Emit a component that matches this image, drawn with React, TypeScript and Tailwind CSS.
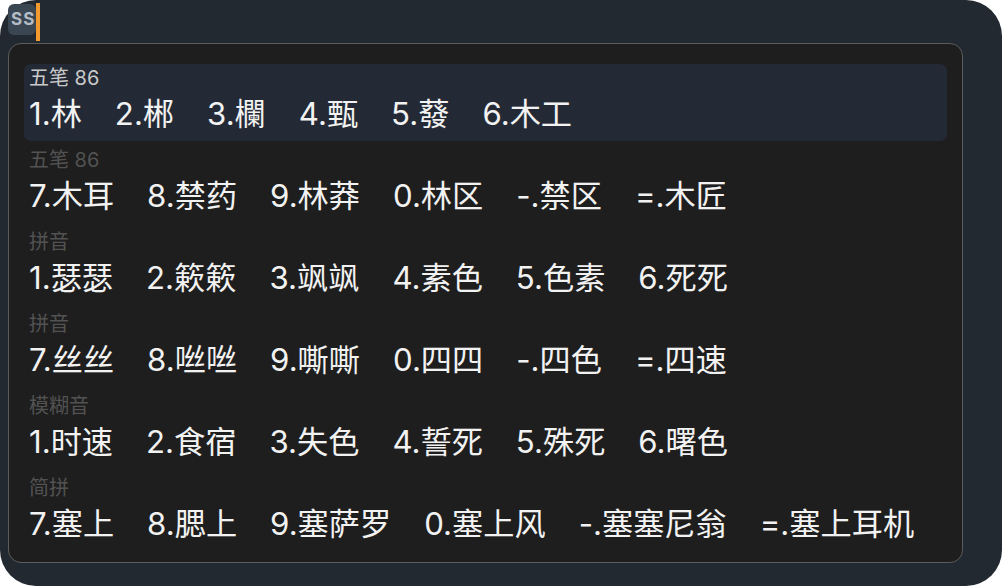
import React from "react";

type Group = { label: string; items: string[]; active?: boolean };

const groups: Group[] = [
  { label: "五笔 86", items: ["1.林", "2.郴", "3.欄", "4.甄", "5.蕟", "6.木工"], active: true },
  { label: "五笔 86", items: ["7.木耳", "8.禁药", "9.林莽", "0.林区", "-.禁区", "=.木匠"] },
  { label: "拼音", items: ["1.瑟瑟", "2.簌簌", "3.飒飒", "4.素色", "5.色素", "6.死死"] },
  { label: "拼音", items: ["7.丝丝", "8.咝咝", "9.嘶嘶", "0.四四", "-.四色", "=.四速"] },
  { label: "模糊音", items: ["1.时速", "2.食宿", "3.失色", "4.誓死", "5.殊死", "6.曙色"] },
  { label: "简拼", items: ["7.塞上", "8.腮上", "9.塞萨罗", "0.塞上风", "-.塞塞尼翁", "=.塞上耳机"] },
];

export default function App() {
  return (
    <div
      className="w-[1002px] h-[586px] bg-white overflow-hidden"
      style={{ fontFamily: '"Inter", "Noto Sans CJK SC", sans-serif' }}
    >
      <div className="w-full h-full bg-[#232931] rounded-[36px] flex flex-col px-[8px] pt-[4px]">
        <div className="flex items-start h-[39px]">
          <div className="h-[31px] w-[28px] rounded-[6px] bg-[#3b4653] flex items-center justify-start pl-[3px] text-[17px] leading-none font-bold text-[#b4bcc6] tracking-[1px]">
            SS
          </div>
          <div className="w-[4px] h-[38px] -mt-[1px] bg-[#f29a2e]" />
        </div>
        <div className="w-[955px] h-[520px] rounded-[13px] border border-[#5c5c5c] bg-[#1e1e1e] flex flex-col gap-[5px] pt-[20px] px-[15px]">
          {groups.map((g, i) => (
            <div
              key={i}
              className={
                "h-[77px] rounded-[7px] flex flex-col px-[5px] pt-[2px] " +
                (g.active ? "bg-[#242a35]" : "")
              }
            >
              <div
                className={
                  "h-[24px] leading-[24px] text-[20px] " +
                  (g.active ? "text-[#c9c9c9]" : "text-[#525252]")
                }
              >
                {g.label}
              </div>
              <div className="mt-[6px] h-[36px] leading-[36px] text-[31.2px] text-[#f2f2f2] flex gap-[33px] whitespace-nowrap">
                {g.items.map((it, j) => (
                  <span key={j}>{it}</span>
                ))}
              </div>
            </div>
          ))}
        </div>
      </div>
    </div>
  );
}
